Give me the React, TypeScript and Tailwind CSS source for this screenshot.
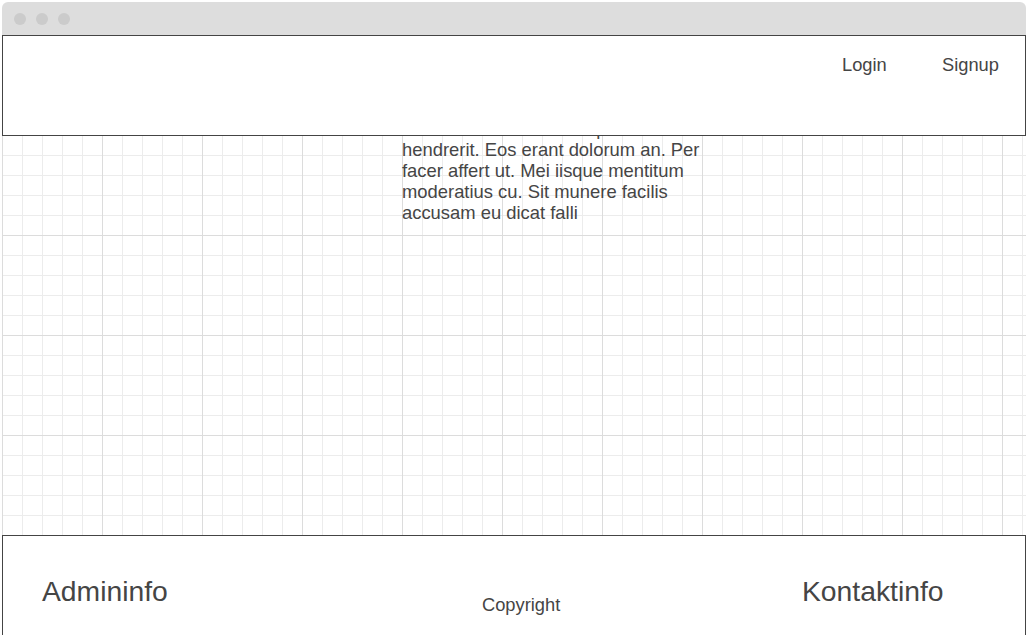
const App: React.FC = () => {
  return (
    <div className="min-h-screen bg-white pl-[2px] pt-[2px] font-['Liberation_Sans',Arial,sans-serif] text-[#454545]">
      <div className="w-[1024px] overflow-hidden">
        {/* title bar */}
        <div className="h-[33px] rounded-t-[6px] bg-[#dddddd] flex items-center gap-[10px] pl-[12px]">
          <span className="w-[12px] h-[12px] rounded-full bg-[#cbcbcb]" />
          <span className="w-[12px] h-[12px] rounded-full bg-[#cbcbcb]" />
          <span className="w-[12px] h-[12px] rounded-full bg-[#cbcbcb]" />
        </div>

        <div className="relative">
          {/* fixed header over the content */}
          <header className="absolute top-0 left-0 z-10 w-full h-[101px] bg-white border border-[#444] flex items-start pt-[18px] pl-[839px] text-[18.3px] leading-[21px]">
            <a className="w-[100px] cursor-pointer">Login</a>
            <a className="cursor-pointer">Signup</a>
          </header>

          {/* grid content */}
          <main className="h-[500px] bg-white bg-[linear-gradient(to_right,#dcdcdc_1px,transparent_1px),linear-gradient(to_bottom,#dcdcdc_1px,transparent_1px),linear-gradient(to_right,#ececec_1px,transparent_1px),linear-gradient(to_bottom,#ececec_1px,transparent_1px)] bg-[size:100px_100px,100px_100px,20px_20px,20px_20px] pt-px">
            <p className="-mt-[2px] ml-[400px] w-[302px] text-[18.4px] leading-[21px]">
              Lorem ipsum dolor sit amet, ut nec
              <br />
              nostrud oportere, ne vix mucius
              <br />
              laboramus. Ne mei errem impetus,
              <br />
              ea vis alii graeci consectetuer
              <br />
              Et in dicant nominavi impetus hendrerit. Eos erant dolorum an. Per facer
              affert ut. Mei iisque mentitum moderatius cu. Sit munere facilis accusam eu
              dicat falli
            </p>
          </main>

          {/* footer */}
          <footer className="h-[110px] border-t border-x border-[#444] bg-white flex pl-[39px]">
            <div className="w-[440px] pt-[39px] text-[28.3px] leading-[32px]">Admininfo</div>
            <div className="w-[320px] pt-[58px] text-[18.3px] leading-[21px]">Copyright</div>
            <div className="pt-[39px] text-[28.3px] leading-[32px]">Kontaktinfo</div>
          </footer>
        </div>
      </div>
    </div>
  );
};

export default App;
